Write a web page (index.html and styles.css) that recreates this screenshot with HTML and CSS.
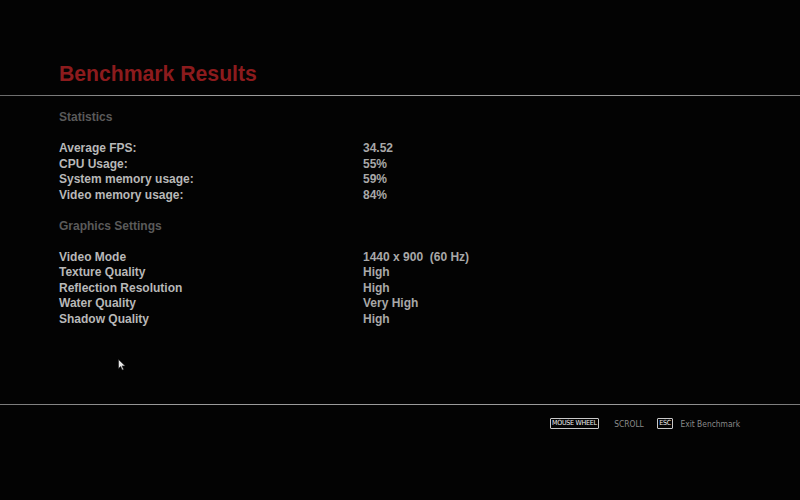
FILE: index.html
```html
<!DOCTYPE html>
<html>
<head>
<meta charset="utf-8">
<link rel="stylesheet" href="styles.css">
</head>
<body>
<div class="screen">
  <header class="header">
    <h1 class="title">Benchmark Results</h1>
  </header>
  <div class="rule"></div>
  <main class="content">
    <div class="section-title">Statistics</div>
    <div class="table">
      <div class="label">Average FPS:</div><div class="value">34.52</div>
      <div class="label">CPU Usage:</div><div class="value">55%</div>
      <div class="label">System memory usage:</div><div class="value">59%</div>
      <div class="label">Video memory usage:</div><div class="value">84%</div>
    </div>
    <div class="section-title">Graphics Settings</div>
    <div class="table">
      <div class="label">Video Mode</div><div class="value">1440 x 900&nbsp; (60 Hz)</div>
      <div class="label">Texture Quality</div><div class="value">High</div>
      <div class="label">Reflection Resolution</div><div class="value">High</div>
      <div class="label">Water Quality</div><div class="value">Very High</div>
      <div class="label">Shadow Quality</div><div class="value">High</div>
    </div>
  </main>
  <footer class="footer">
    <div class="rule"></div>
    <div class="hints">
      <span class="key key-wheel">MOUSE WHEEL</span>
      <span class="hint hint-scroll">SCROLL</span>
      <span class="key key-esc">ESC</span>
      <span class="hint">Exit Benchmark</span>
    </div>
  </footer>
  <svg class="cursor" width="8" height="12" viewBox="0 0 8 12">
    <path d="M0.5 0.5 L0.5 9.5 L2.7 7.4 L4.2 11 L5.6 10.4 L4.1 6.9 L7.2 6.9 Z" fill="#e8e8e8" stroke="#222" stroke-width="0.6"/>
  </svg>
</div>
</body>
</html>
```

FILE: styles.css
```css
html, body {
  margin: 0;
  padding: 0;
  background: #020202;
}

.screen {
  position: relative;
  width: 800px;
  height: 500px;
  display: flex;
  flex-direction: column;
  overflow: hidden;
  font-family: "Liberation Sans", Arial, sans-serif;
  background: #030303;
}

.header {
  padding: 62px 0 0 59px;
}

.title {
  margin: 0;
  font-size: 21.2px;
  line-height: 24px;
  font-weight: bold;
  color: #8c1b1d;
}

.rule {
  height: 1px;
  background: linear-gradient(to right, #6a6a6a, #9a9a9a 20%, #9a9a9a 80%, #7a7a7a);
  margin-top: 9px;
}

.content {
  flex: 1;
  padding: 14px 0 0 59px;
}

.section-title {
  font-size: 12px;
  line-height: 15.5px;
  font-weight: bold;
  color: #5a5a5a;
  margin-bottom: 15.5px;
}

.table {
  display: grid;
  grid-template-columns: 304px auto;
  font-size: 12px;
  line-height: 15.5px;
  font-weight: bold;
  margin-bottom: 15.5px;
}

.label {
  color: #b8b8b8;
}

.value {
  color: #a8a8a8;
}

.footer {
  height: 96px;
}

.footer .rule {
  margin-top: 0;
  background: linear-gradient(to right, #7a7a7a, #9a9a9a 20%, #9a9a9a 80%, #7a7a7a);
}

.hints {
  display: flex;
  justify-content: flex-end;
  align-items: center;
  padding: 13px 60px 0 0;
  font-family: "DejaVu Sans Condensed", "DejaVu Sans", sans-serif;
  font-size: 8.4px;
  line-height: 10px;
}

.key {
  border: 1px solid #c8c8c8;
  border-radius: 1px;
  padding: 0 1.5px;
  color: #eeeeee;
  font-size: 7px;
  line-height: 9px;
  letter-spacing: -0.25px;
}

.key-wheel {
  margin-right: 15px;
}

.key-esc {
  margin-right: 7px;
}

.hint {
  color: #8a8a8a;
}

.hint-scroll {
  margin-right: 13px;
}

.cursor {
  position: absolute;
  left: 118px;
  top: 359px;
}
```
